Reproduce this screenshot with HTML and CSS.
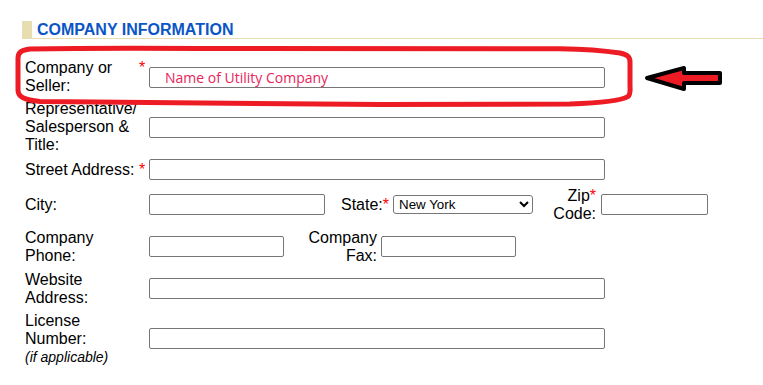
FILE: index.html
```html
<!DOCTYPE html>
<html lang="en">
<head>
<meta charset="utf-8">
<title>Company Information</title>
<link rel="stylesheet" href="styles.css">
</head>
<body>
<div class="page">
  <h2 class="section-title">COMPANY INFORMATION</h2>
  <div class="form">
    <div class="row">
      <div class="lbl"><span class="lbl-text">Company or<br>Seller:</span><span class="req star">*</span></div>
      <input class="inp inp-wide inp-filled" type="text" value="Name of Utility Company">
    </div>
    <div class="row">
      <div class="lbl"><span class="lbl-text">Representative/<br>Salesperson &amp;<br>Title:</span></div>
      <input class="inp inp-wide" type="text">
    </div>
    <div class="row">
      <div class="lbl"><span class="lbl-text">Street Address:</span><span class="req star">*</span></div>
      <input class="inp inp-wide" type="text">
    </div>
    <div class="row row-loose">
      <div class="lbl"><span class="lbl-text">City:</span></div>
      <input class="inp inp-city" type="text">
      <span class="state-lbl">State:<span class="req">*</span></span>
      <select class="sel"><option>New York</option></select>
      <span class="zip-lbl">Zip<span class="req">*</span><br>Code:</span>
      <input class="inp inp-zip" type="text">
    </div>
    <div class="row row-step">
      <div class="lbl"><span class="lbl-text">Company<br>Phone:</span></div>
      <input class="inp inp-phone" type="text">
      <span class="fax-lbl">Company<br>Fax:</span>
      <input class="inp inp-fax" type="text">
    </div>
    <div class="row row-step">
      <div class="lbl"><span class="lbl-text">Website<br>Address:</span></div>
      <input class="inp inp-wide" type="text">
    </div>
    <div class="row">
      <div class="lbl"><span class="lbl-text">License<br>Number:<br><em class="note">(if applicable)</em></span></div>
      <input class="inp inp-wide" type="text">
    </div>
  </div>
</div>
<svg class="overlay" width="763" height="385" viewBox="0 0 763 385" aria-hidden="true">
  <path class="ring" d="M 30 49 C 22 50, 18 52, 18 58 L 18 90 C 18 97, 24 100, 40 101.5 L 380 104.5 L 570 104 C 600 103, 622 100.5, 628 96.5 C 631 94, 630 90, 630 85 L 630 62 C 630 57, 628 55, 620 53 C 600 50, 580 49, 560 48.7 L 200 48.5 C 100 48, 60 48.5, 30 49 Z"/>
  <path class="arrow" d="M 647 78 L 684 68 L 684 73 L 720 73 L 720 83 L 684 83 L 684 89 Z"/>
</svg>
</body>
</html>
```

FILE: styles.css
```css
html, body {
  margin: 0;
  padding: 0;
  background: #ffffff;
}

body {
  position: relative;
  width: 763px;
  height: 385px;
  overflow: hidden;
  font-family: "Liberation Sans", Arial, sans-serif;
  font-size: 16px;
  color: #000;
}

.page {
  padding: 21px 0 0 22px;
}

.section-title {
  margin: 0;
  height: 17px;
  line-height: 17px;
  padding-left: 5px;
  border-left: 10px solid #e8dcb1;
  border-bottom: 1px solid #e8dcb1;
  color: #0b55c6;
  font-size: 16px;
  font-weight: bold;
}

.form {
  display: flex;
  flex-direction: column;
  gap: 5px;
  margin-top: 20px;
  padding-left: 3px;
}

.row {
  display: flex;
  align-items: center;
}

.row-loose {
  margin-top: 1.5px;
}

.row-step {
  margin-top: 1px;
}

.lbl {
  width: 124px;
  flex: none;
  display: flex;
  align-items: baseline;
  line-height: 18px;
}

.lbl-text {
  width: 114px;
  flex: none;
}

.req {
  color: #ff0000;
}

.star {
  width: 10px;
}

.note {
  font-size: 14px;
  line-height: 16px;
}

.inp {
  box-sizing: border-box;
  height: 21px;
  margin: 0;
  padding: 0 2px;
  border: 1px solid #767676;
  border-radius: 2px;
  background: #fff;
  font-family: "Liberation Sans", Arial, sans-serif;
  font-size: 13.33px;
  flex: none;
}

.inp-wide { width: 456px; }
.inp-city { width: 176px; }
.inp-zip { width: 107px; margin-left: 5px; }
.inp-phone { width: 135px; }
.inp-fax { width: 135px; margin-left: 4px; }

.inp-filled {
  padding-left: 15px;
  font-family: "Open Sans", "Noto Sans", sans-serif;
  font-size: 14px;
  color: #e8245a;
}

.state-lbl {
  margin-left: 16px;
  line-height: 18px;
}

.sel {
  box-sizing: border-box;
  width: 140px;
  height: 19px;
  margin: 0 0 0 4px;
  padding: 0 0 0 1px;
  border: 1px solid #767676;
  border-radius: 3px;
  background: #fff;
  color: #000;
  font-family: "Liberation Sans", Arial, sans-serif;
  font-size: 13.33px;
  flex: none;
}

.zip-lbl {
  width: 55px;
  margin-left: 8px;
  text-align: right;
  line-height: 18px;
  flex: none;
}

.fax-lbl {
  width: 93px;
  text-align: right;
  line-height: 18px;
  flex: none;
}

.overlay {
  position: absolute;
  top: 0;
  left: 0;
  pointer-events: none;
}

.ring {
  fill: none;
  stroke: #ed1c24;
  stroke-width: 5;
}

.arrow {
  fill: #ed1c24;
  stroke: #000;
  stroke-width: 4;
  stroke-linejoin: round;
}
```
